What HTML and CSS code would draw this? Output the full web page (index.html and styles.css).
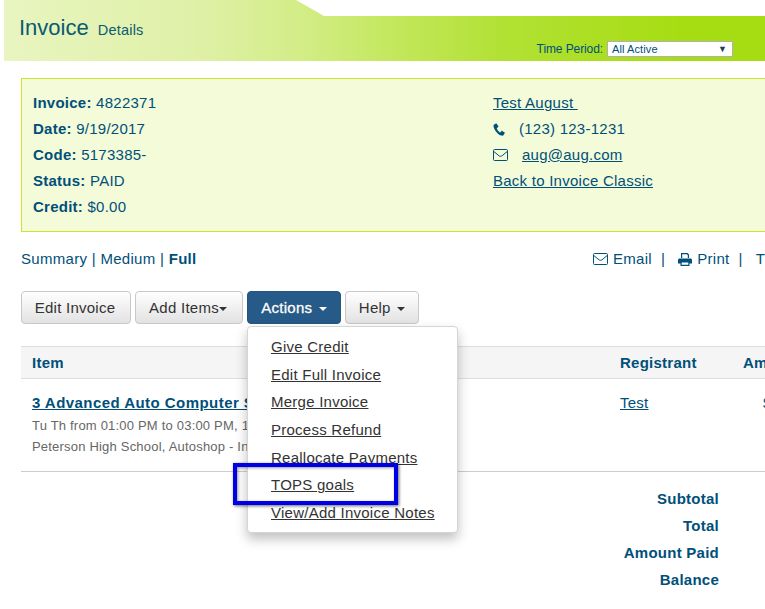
FILE: index.html
```html
<!DOCTYPE html>
<html lang="en">
<head>
<meta charset="utf-8">
<title>Invoice Details</title>
<link rel="stylesheet" href="styles.css">
</head>
<body>
<div class="page">
  <header class="banner">
    <div class="notch"></div>
    <h1 class="title">Invoice <small>Details</small></h1>
    <div class="period">
      <label>Time Period:</label>
      <div class="select"><span>All Active</span><i>▼</i></div>
    </div>
  </header>

  <section class="panel">
    <div class="col col-left">
      <p><b>Invoice:</b> 4822371</p>
      <p><b>Date:</b> 9/19/2017</p>
      <p><b>Code:</b> 5173385-</p>
      <p><b>Status:</b> PAID</p>
      <p><b>Credit:</b> $0.00</p>
    </div>
    <div class="col col-right">
      <p><a href="#">Test August&nbsp;</a></p>
      <p class="contact">
        <svg class="ico phone" viewBox="0 0 14 14"><path d="M3.2.6 1.2 1.600C.5 2 .4 3 .7 4.200c1 3.800 4.800 8.500 8.300 9.300 1.100.3 2.100 0 2.600-.8l1.100-1.800c.2-.3.1-.6-.2-.8L9.900 8.500c-.3-.2-.6-.1-.8.1L8 10c-.2.200-.4.200-.7.100C6 9.300 4.600 7.500 4.100 6c-.1-.3 0-.5.200-.7l1.300-.9c.3-.2.300-.5.200-.8L4 .9C3.800.5 3.500.4 3.200.6Z"/></svg>
        <span class="phone-num">(123) 123-1231</span>
      </p>
      <p class="contact">
        <svg class="ico mail" viewBox="0 0 15 12"><path d="M1.500.5h12a1 1 0 0 1 1 1v9a1 1 0 0 1-1 1h-12a1 1 0 0 1-1-1v-9a1 1 0 0 1 1-1ZM.8 2.500 6 6.800c.9.700 2.100.700 3 0l5.200-4.300" fill="none" stroke="#00507a" stroke-width="1"/></svg>
        <a class="mail-link" href="#">aug@aug.com</a>
      </p>
      <p><a href="#">Back to Invoice Classic</a></p>
    </div>
  </section>

  <nav class="views">
    <div class="views-left">Summary | Medium | <b>Full</b></div>
    <div class="views-right">
      <span class="tool"><svg class="ico mail" viewBox="0 0 15 12"><path d="M1.500.5h12a1 1 0 0 1 1 1v9a1 1 0 0 1-1 1h-12a1 1 0 0 1-1-1v-9a1 1 0 0 1 1-1ZM.8 2.500 6 6.800c.9.700 2.100.700 3 0l5.200-4.300" fill="none" stroke="#00507a" stroke-width="1"/></svg> Email</span>
      <span class="sep">|</span>
      <span class="tool"><svg class="ico print" viewBox="0 0 14 13"><path d="M3 0h6.500L11 1.500V5H9.800V2.300L8.800 1.200H4.200V5H3ZM1.500 5.500h11c.8 0 1.500.7 1.500 1.500v3.500h-2.500V13h-9v-2.500H0V7c0-.8.700-1.500 1.500-1.500Zm2.200 4v2.300h6.600V9.500Z"/></svg> Print</span>
      <span class="sep">|</span>
      <span class="tool">T</span>
    </div>
  </nav>

  <div class="toolbar">
    <button class="btn w-edit">Edit Invoice</button>
    <button class="btn w-add">Add Items<i class="caret tight"></i></button>
    <button class="btn primary w-actions">Actions <i class="caret"></i></button>
    <button class="btn w-help">Help <i class="caret"></i></button>
  </div>

  <div class="table">
    <div class="thead">
      <div class="c-item">Item</div>
      <div class="c-reg">Registrant</div>
      <div class="c-amt">Amount</div>
    </div>
    <div class="tbody">
      <div class="c-item">
        <a class="course" href="#">3 Advanced Auto Computer Systems</a>
        <div class="meta">Tu Th from 01:00 PM to 03:00 PM, 10 sessions</div>
        <div class="meta">Peterson High School, Autoshop - Instructor</div>
      </div>
      <div class="c-reg"><a href="#">Test</a></div>
      <div class="c-amt">$</div>
    </div>
    <div class="totals">
      <div>Subtotal</div>
      <div>Total</div>
      <div>Amount Paid</div>
      <div>Balance</div>
    </div>
  </div>

  <ul class="menu">
    <li><a href="#">Give Credit</a></li>
    <li><a href="#">Edit Full Invoice</a></li>
    <li><a href="#">Merge Invoice</a></li>
    <li><a href="#">Process Refund</a></li>
    <li><a href="#">Reallocate Payments</a></li>
    <li><a href="#">TOPS goals</a></li>
    <li><a href="#">View/Add Invoice Notes</a></li>
  </ul>
  <div class="callout"></div>
</div>
</body>
</html>
```
FILE: styles.css
```css
* { box-sizing: border-box; }
html, body { margin: 0; height: 100%; overflow: hidden; background: #fff; }
body {
  font-family: "Liberation Sans", Arial, sans-serif;
  font-size: 15px;
  letter-spacing: 0.25px;
  color: #00507a;
}
a { color: inherit; }
p { margin: 0; }
.page { position: relative; width: 765px; height: 609px; overflow: hidden; }

.banner {
  position: relative;
  margin-left: 4px;
  height: 61px;
  background: linear-gradient(90deg, #e8f5c0 0, #dff0a6 196px, #d3ed88 296px, #c2e75a 396px, #b2e135 496px, #a6dd12 676px);
  display: flex;
  align-items: flex-start;
  justify-content: space-between;
}
.notch {
  position: absolute;
  top: 0; right: 0;
  width: 469px; height: 16px;
  background: #fff;
  clip-path: polygon(0 0, 100% 0, 100% 100%, 28px 100%);
}
.title {
  margin: 14px 0 0 15px;
  font-size: 22px;
  line-height: 28px;
  font-weight: 400;
  letter-spacing: 0;
  color: #0b5a72;
}
.title small { font-size: 14.500px; margin-left: 3px; letter-spacing: 0.2px; }
.period {
  display: flex;
  align-items: center;
  gap: 4px;
  margin: 41px 32px 0 0;
  font-size: 12px;
  letter-spacing: -0.1px;
}
.select {
  width: 126px; height: 16px;
  background: #fff;
  border: 1px solid #b0b0b0;
  display: flex;
  justify-content: space-between;
  align-items: center;
  padding: 0 5px 0 4px;
  font-size: 11px;
  color: #00507a;
  letter-spacing: 0.1px;
}
.select i { font-style: normal; font-size: 9px; color: #1a3d5c; }

.panel {
  margin: 17px 0 0 21px;
  width: 780px;
  height: 154px;
  border: 1px solid #cfe32a;
  background: #f4fbd9;
  padding: 11px 10px 11px 11px;
  display: flex;
}
.col p { height: 26px; line-height: 26px; }
.col-left { width: 460px; }
.contact { display: flex; align-items: center; }
.ico { fill: #00507a; flex: none; }
.phone { width: 13px; height: 13px; }
.mail { width: 15px; height: 12px; }
.phone-num { margin-left: 13px; }
.mail-link { margin-left: 14px; }

.views {
  margin: 14px 0 0 21px;
  width: 780px;
  height: 26px;
  line-height: 26px;
  letter-spacing: 0.3px;
  display: flex;
  justify-content: space-between;
}
.views-right { display: flex; align-items: center; width: 208px; }
.tool { display: inline-flex; align-items: center; gap: 5px; }
.print { width: 14px; height: 13px; }
.sep { margin: 0 13px 0 9px; }

.toolbar { margin: 19px 0 0 21px; display: flex; gap: 4px; height: 33px; }
.btn {
  font: inherit;
  letter-spacing: inherit;
  height: 33px;
  padding: 0;
  text-align: center;
  border: 1px solid #c8c8c8;
  border-radius: 4px;
  background: linear-gradient(#fff, #e2e2e2);
  color: #333;
  white-space: nowrap;
}
.w-edit { width: 110px; padding-right: 2px; }
.w-add { width: 108px; padding-right: 2px; }
.w-actions { width: 94px; }
.w-help { width: 74px; }
.btn.primary {
  background: #265a88;
  border-color: #245580;
  color: #fff;
  text-shadow: 0 -1px 0 rgba(0,0,0,.2);
  -webkit-text-stroke: 0.3px #fff;
}
.caret {
  display: inline-block;
  width: 0; height: 0;
  margin-left: 2px;
  vertical-align: middle;
  border-top: 4px solid currentColor;
  border-left: 4px solid transparent;
  border-right: 4px solid transparent;
}
.caret.tight { margin-left: 0; }

.table { margin: 22px 0 0 21px; width: 820px; }
.thead, .tbody { display: flex; }
.thead {
  height: 33px;
  line-height: 31px;
  background: #f5f5f5;
  border-top: 1px solid #ddd;
  border-bottom: 1px solid #ddd;
  font-weight: 700;
}
.c-item { width: 599px; padding-left: 11px; }
.c-reg { width: 123px; }
.c-amt { flex: 1; }
.tbody { height: 93px; padding-top: 14px; border-bottom: 1px solid #ccc; line-height: 20px; }
.tbody .c-amt { padding-left: 20px; }
.course { font-weight: 700; white-space: nowrap; letter-spacing: 0.45px; }
.meta { font-size: 13px; letter-spacing: 0.2px; color: #666; line-height: 21px; white-space: nowrap; }
.meta:first-of-type { margin-top: 2px; }

.totals { width: 698px; padding-top: 13px; text-align: right; font-weight: 700; }
.totals div { height: 27px; line-height: 27px; }

.menu {
  position: absolute;
  left: 247px; top: 326px;
  width: 211px; height: 207px;
  margin: 0;
  padding: 6px 0 0 23px;
  list-style: none;
  background: #fff;
  border: 1px solid #d5d5d5;
  border-radius: 4px;
  box-shadow: 0 6px 12px rgba(0,0,0,.25);
  color: #333;
}
.menu li { height: 27.670px; line-height: 27.670px; }
.callout {
  position: absolute;
  left: 233px; top: 463px;
  width: 165px; height: 42px;
  border: 4px solid #0000e6;
  box-shadow: 1px 1px 3px rgba(0,0,0,.6), inset 1px 1px 3px rgba(0,0,0,.4);
}
```
